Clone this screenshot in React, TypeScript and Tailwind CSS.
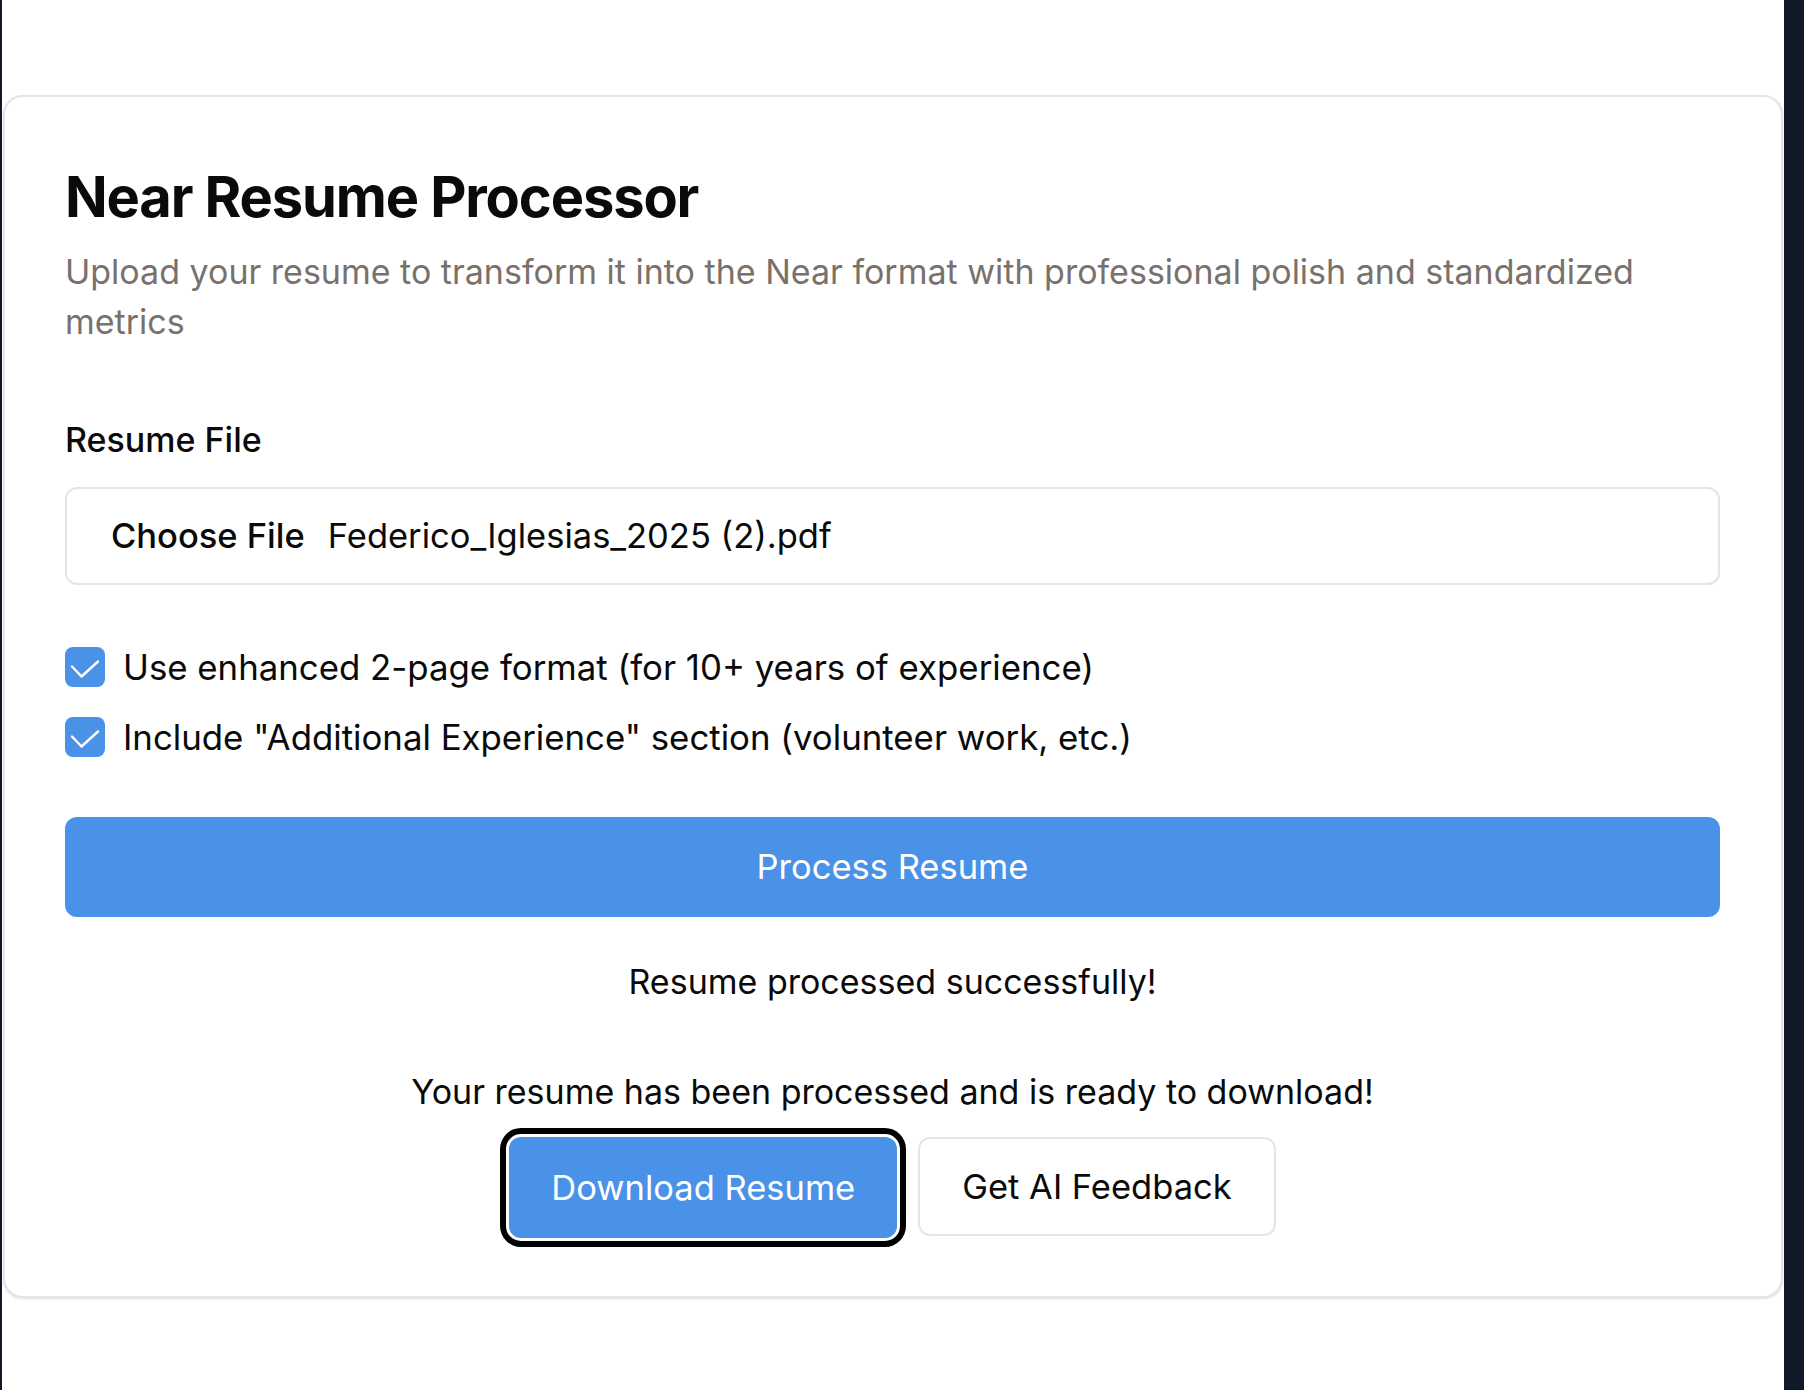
import { useState } from "react";

const CheckBox = ({
  checked,
  onClick,
}: {
  checked: boolean;
  onClick: () => void;
}) => (
  <button
    onClick={onClick}
    className={`flex items-center justify-center w-[40px] h-[40px] shrink-0 rounded-[8px] ${
      checked ? "bg-[#4a91e8]" : "bg-white border-2 border-[#d4d4d4]"
    }`}
  >
    {checked && (
      <svg viewBox="0 0 40 40" className="w-[40px] h-[40px]">
        <path
          d="M7 19.5 L16.5 29.5 L33 14.5"
          fill="none"
          stroke="white"
          strokeWidth="2.4"
          strokeLinecap="round"
          strokeLinejoin="round"
        />
      </svg>
    )}
  </button>
);

export default function App() {
  const [twoPage, setTwoPage] = useState(true);
  const [additional, setAdditional] = useState(true);

  return (
    <div
      className="flex min-h-[1390px] bg-[#111827] text-[#0a0a0a]"
      style={{ fontFamily: "Inter, 'Noto Sans', sans-serif" }}
    >
      <div className="ml-[2px] w-[1782px] bg-white px-[1px] pt-[95px]">
        <div className="w-full rounded-[20px] border-2 border-[#e5e5e5] bg-white shadow-sm pl-[60px] pr-[61px] pt-[67px] pb-[58px]">
          <h1 className="text-[56px] leading-[67px] font-bold tracking-[-0.02em] text-[#0c0a09]">
            Near Resume Processor
          </h1>
          <p className="mt-[16px] text-[34px] leading-[50px] text-[#78716c]">
            Upload your resume to transform it into the Near format with
            professional polish and standardized metrics
          </p>

          <label className="block mt-[73px] text-[34px] leading-[40px] font-medium">
            Resume File
          </label>
          <div className="mt-[27px] flex items-center h-[98px] rounded-[12px] border-2 border-[#e5e5e5] px-[44px] text-[34.5px]">
            <span className="font-medium">Choose File</span>
            <span className="ml-[23px]">Federico_Iglesias_2025 (2).pdf</span>
          </div>

          <div className="mt-[62px] flex flex-col gap-[30px]">
            <div className="flex items-center gap-[18px]">
              <CheckBox checked={twoPage} onClick={() => setTwoPage(!twoPage)} />
              <span className="text-[34.8px] leading-[40px]">
                Use enhanced 2-page format (for 10+ years of experience)
              </span>
            </div>
            <div className="flex items-center gap-[18px]">
              <CheckBox
                checked={additional}
                onClick={() => setAdditional(!additional)}
              />
              <span className="text-[34.8px] leading-[40px]">
                Include "Additional Experience" section (volunteer work, etc.)
              </span>
            </div>
          </div>

          <button className="mt-[60px] w-full h-[100px] rounded-[12px] bg-[#4a91e8] text-white text-[34.5px]">
            Process Resume
          </button>

          <p className="mt-[41px] text-center text-[34px] leading-[48px]">
            Resume processed successfully!
          </p>

          <p className="mt-[62px] text-center text-[34px] leading-[48px]">
            Your resume has been processed and is ready to download!
          </p>
          <div className="mt-[21px] flex justify-center gap-[21px]">
            <button className="h-[101px] px-[42px] rounded-[12px] bg-[#4a91e8] text-white text-[34.5px] ring-[6px] ring-black ring-offset-[3px] ring-offset-white">
              Download Resume
            </button>
            <button className="h-[99px] px-[42px] rounded-[12px] border-2 border-[#e5e5e5] bg-white text-[34.5px]">
              Get AI Feedback
            </button>
          </div>
        </div>
      </div>
    </div>
  );
}
